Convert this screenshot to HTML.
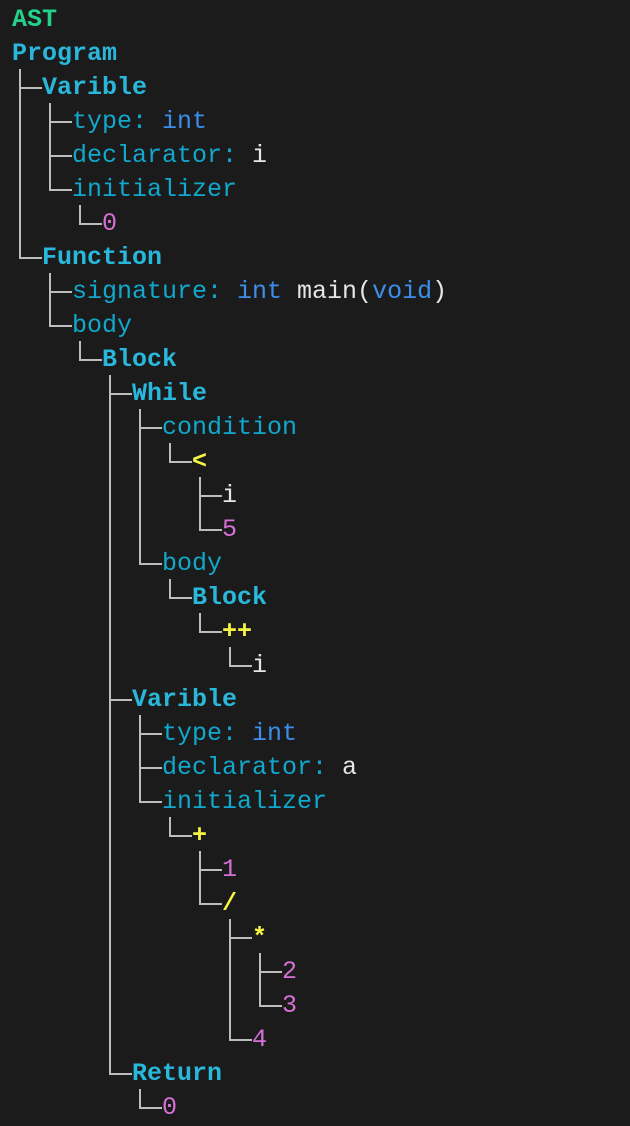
<!DOCTYPE html>
<html><head><meta charset="utf-8"><style>
html,body{margin:0;padding:0;background:#1b1b1b;width:630px;height:1126px;overflow:hidden}
#c{position:relative;width:630px;height:1126px;font-family:"Liberation Mono","DejaVu Sans Mono",monospace;font-size:25px}
.t{position:absolute;white-space:pre;line-height:34px;height:34px}
.l{position:absolute;background:#bdbdbd}
.n{color:#29b8db;font-weight:bold}.g{color:#23d18b;font-weight:bold}
.k{color:#11a8cd}.b{color:#3b8eea}.w{color:#e5e5e5}.m{color:#d670d6}.y{color:#f5f543;font-weight:bold}
</style></head><body><div id="c"></div>
<script>
(function(){
var rows=[
[0,'<span class="g">AST</span>'],
[0,'<span class="n">Program</span>'],
[1,'<span class="n">Varible</span>'],
[2,'<span class="k">type: </span><span class="b">int</span>'],
[2,'<span class="k">declarator: </span><span class="w">i</span>'],
[2,'<span class="k">initializer</span>'],
[3,'<span class="m">0</span>'],
[1,'<span class="n">Function</span>'],
[2,'<span class="k">signature: </span><span class="b">int</span><span class="w"> main(</span><span class="b">void</span><span class="w">)</span>'],
[2,'<span class="k">body</span>'],
[3,'<span class="n">Block</span>'],
[4,'<span class="n">While</span>'],
[5,'<span class="k">condition</span>'],
[6,'<span class="y">&lt;</span>'],
[7,'<span class="w">i</span>'],
[7,'<span class="m">5</span>'],
[5,'<span class="k">body</span>'],
[6,'<span class="n">Block</span>'],
[7,'<span class="y">++</span>'],
[8,'<span class="w">i</span>'],
[4,'<span class="n">Varible</span>'],
[5,'<span class="k">type: </span><span class="b">int</span>'],
[5,'<span class="k">declarator: </span><span class="w">a</span>'],
[5,'<span class="k">initializer</span>'],
[6,'<span class="y">+</span>'],
[7,'<span class="m">1</span>'],
[7,'<span class="y">/</span>'],
[8,'<span class="y">*</span>'],
[9,'<span class="m">2</span>'],
[9,'<span class="m">3</span>'],
[8,'<span class="m">4</span>'],
[4,'<span class="n">Return</span>'],
[5,'<span class="m">0</span>']
];
var c=document.getElementById('c'),h='';
function cy(i){return 20+34*i;}
for(var i=0;i<rows.length;i++){
 var d=rows[i][0],x=12+30*d;
 h+='<div class="t" style="left:'+x+'px;top:'+(cy(i)-17)+'px">'+rows[i][1]+'</div>';
 if(i>=2&&d>=1){
  var lx=12+30*(d-1)+7;
  h+='<div class="l" style="left:'+lx+'px;top:'+(cy(i)-1)+'px;width:'+(x-lx)+'px;height:2px"></div>';
  var p=i-1;while(rows[p][0]>=d)p--;
  var prev=i-1;while(rows[prev][0]>d)prev--;
  var vt=(prev===p)?cy(p)+15:cy(prev);
  h+='<div class="l" style="left:'+lx+'px;top:'+vt+'px;width:2px;height:'+(cy(i)+1-vt)+'px"></div>';
 }
}
c.innerHTML=h;
})();
</script></body></html>
